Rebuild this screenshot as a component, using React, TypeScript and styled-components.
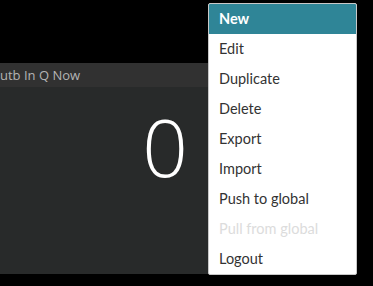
import React from "react";
import styled, { createGlobalStyle } from "styled-components";

const Global = createGlobalStyle`
  html, body { margin: 0; padding: 0; background: #000; }
  body { width: 373px; height: 286px; overflow: hidden; position: relative; }
`;

const Page = styled.div`
  width: 373px;
  height: 286px;
  position: relative;
  padding-top: 63px;
  box-sizing: border-box;
`;

const Panel = styled.section`
  width: 208px;
  height: 211px;
  background: #282a2a;
  display: flex;
  flex-direction: column;
`;

const PanelHeader = styled.header`
  height: 24px;
  background: #313131;
  color: #b4b4b4;
  font-family: "Open Sans", sans-serif;
  font-size: 13px;
  line-height: 24px;
  white-space: nowrap;
  overflow: hidden;
`;

const PanelBody = styled.div`
  flex: 1;
  display: flex;
  justify-content: flex-end;
  padding: 19px 20px 0 0;
`;

const Count = styled.div`
  font-family: "Open Sans", sans-serif;
  font-weight: 300;
  font-size: 80px;
  line-height: 80px;
  color: #fff;
`;

const Menu = styled.ul`
  position: absolute;
  left: 208px;
  top: 3px;
  width: 147px;
  margin: 0;
  padding: 0;
  list-style: none;
  background: #fff;
  border: 1px solid #c8c8c8;
  border-radius: 2px;
  overflow: hidden;
`;

const Item = styled.li<{ $active?: boolean; $disabled?: boolean }>`
  height: 30px;
  line-height: 30px;
  padding-left: 10px;
  font-family: "Lato", sans-serif;
  font-size: 14.5px;
  font-weight: ${(p) => (p.$active ? 700 : 400)};
  background: ${(p) => (p.$active ? "#2f8597" : "transparent")};
  color: ${(p) => (p.$active ? "#fff" : p.$disabled ? "#dcdcdc" : "#333")};
`;

const items = [
  "New",
  "Edit",
  "Duplicate",
  "Delete",
  "Export",
  "Import",
  "Push to global",
  "Pull from global",
  "Logout",
];

export default function App() {
  return (
    <Page>
      <Global />
      <Panel>
        <PanelHeader>utb In Q Now</PanelHeader>
        <PanelBody>
          <Count>0</Count>
        </PanelBody>
      </Panel>
      <Menu>
        {items.map((t) => (
          <Item key={t} $active={t === "New"} $disabled={t === "Pull from global"}>
            {t}
          </Item>
        ))}
      </Menu>
    </Page>
  );
}
